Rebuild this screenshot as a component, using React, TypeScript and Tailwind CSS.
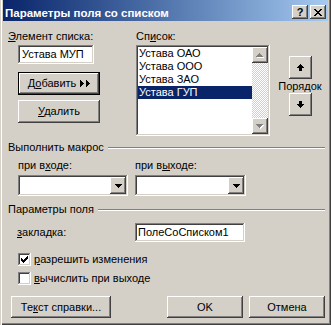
import React from "react";

const RAISED =
  "bg-[#d4d0c8] shadow-[inset_-1px_-1px_#404040,inset_1px_1px_#ffffff,inset_-2px_-2px_#808080,inset_2px_2px_#d4d0c8]";
const SUNKEN =
  "bg-white shadow-[inset_-1px_-1px_#ffffff,inset_1px_1px_#808080,inset_-2px_-2px_#d4d0c8,inset_2px_2px_#404040]";

function Pix({ rows, color, shadow }: { rows: string[]; color: string; shadow?: string }) {
  const w = rows[0].length;
  const h = rows.length;
  const ow = shadow ? w + 1 : w;
  const oh = shadow ? h + 1 : h;
  const pts: [number, number][] = [];
  rows.forEach((r, y) =>
    r.split("").forEach((c, x) => {
      if (c === "#") pts.push([x, y]);
    })
  );
  return (
    <svg width={ow} height={oh} viewBox={`0 0 ${ow} ${oh}`} shapeRendering="crispEdges" className="block">
      {shadow &&
        pts.map(([x, y]) => <rect key={`s${x}-${y}`} x={x + 1} y={y + 1} width={1} height={1} fill={shadow} />)}
      {pts.map(([x, y]) => (
        <rect key={`${x}-${y}`} x={x} y={y} width={1} height={1} fill={color} />
      ))}
    </svg>
  );
}

const CLOSE = ["##....##", ".##..##.", "..####..", "...##...", "..####..", ".##..##.", "##....##"];
const UP = ["...#...", "..###..", ".#####.", "#######", "..###..", "..###..", "..###.."];
const DOWN = [...UP].reverse();
const SMALL_DOWN = ["#######", ".#####.", "..###..", "...#..."];
const SMALL_UP = [...SMALL_DOWN].reverse();
const DBL = ["#.....#...", "##....##..", "###...###.", "####..####", "###...###.", "##....##..", "#.....#..."];
const CHECK = ["......#", ".....##", "#...###", "##.###.", "#####..", ".###...", "..#...."];

function Button({ w, h = 22, children, className = "" }: { w: number; h?: number; children: React.ReactNode; className?: string }) {
  return (
    <div className={`${RAISED} flex items-center justify-center ${className}`} style={{ width: w, height: h }}>
      {children}
    </div>
  );
}

function Combo({ w }: { w: number }) {
  return (
    <div className={`${SUNKEN} h-[21px] p-[2px] flex justify-end`} style={{ width: w }}>
      <div className={`${RAISED} w-[16px] h-[17px] flex items-center justify-center`}>
        <Pix rows={SMALL_DOWN} color="#000" />
      </div>
    </div>
  );
}

function Checkbox({ checked }: { checked: boolean }) {
  return (
    <div className={`${SUNKEN} w-[13px] h-[13px] pl-[3px] pt-[3px] shrink-0`}>
      {checked && <Pix rows={CHECK} color="#000" />}
    </div>
  );
}

function Separator({ label, mt }: { label: string; mt: string }) {
  return (
    <div className={`flex ml-[8px] mr-[6px] ${mt}`}>
      <span className="whitespace-nowrap">{label}</span>
      <div className="flex-1 ml-[4px] mt-[6px] h-[2px] border-t border-t-[#808080] border-b border-b-white" />
    </div>
  );
}

export default function App() {
  const items = ["Устава ОАО", "Устава ООО", "Устава ЗАО", "Устава ГУП"];
  return (
    <div className="font-['Liberation_Sans',Arial,sans-serif] w-[331px] h-[325px] bg-[#d4d0c8] text-[11px] leading-[13px] text-black overflow-hidden flex flex-col shadow-[inset_1px_0_#d4d0c8,inset_2px_0_#ffffff,inset_-1px_-1px_#404040,inset_-2px_-2px_#808080]">
      {/* Title bar */}
      <div className="mx-[3px] h-[21px] shrink-0 flex items-start pt-[5px] bg-linear-to-r from-[#0a246a] to-[#a6caf0]">
        <span className="ml-[2px] mt-[1px] text-[11.5px] leading-[14px] font-bold text-white whitespace-nowrap">
          Параметры поля со списком
        </span>
        <div className="ml-auto mr-[2px] flex gap-[2px]">
          <div className={`${RAISED} w-[16px] h-[14px] flex items-center justify-center text-[11px] leading-[11px] font-bold`}>
            ?
          </div>
          <div className={`${RAISED} w-[16px] h-[14px] flex items-center justify-center`}>
            <Pix rows={CLOSE} color="#000" />
          </div>
        </div>
      </div>

      {/* Section 1 */}
      <div className="flex mt-[9px]">
        <div className="ml-[8px] w-[128px] flex flex-col">
          <div>
            <u>Э</u>лемент списка:
          </div>
          <div className={`${SUNKEN} ml-[10px] mt-[2px] w-[76px] h-[19px] flex items-center pl-[4px]`}>Устава МУП</div>
          <div className="ml-[10px] mt-[8px] w-[82px] h-[23px] border border-black">
            <div className={`${RAISED} w-full h-full flex items-center justify-center gap-[4px]`}>
              <span>
                Д<u>о</u>бавить
              </span>
              <Pix rows={DBL} color="#000" />
            </div>
          </div>
          <Button w={82} h={23} className="ml-[10px] mt-[5px]">
            <span>
              <u>У</u>далить
            </span>
          </Button>
        </div>

        <div className="w-[134px] flex flex-col">
          <div>
            Сп<u>и</u>сок:
          </div>
          <div className={`${SUNKEN} mt-[2px] h-[91px] p-[2px] flex`}>
            <div className="flex-1 flex flex-col">
              {items.map((it, i) => (
                <div
                  key={it}
                  className={`h-[13px] pl-[1px] whitespace-nowrap ${i === 3 ? "bg-[#0a246a] text-white" : ""}`}
                >
                  {it}
                </div>
              ))}
            </div>
            <div className="w-[16px] flex flex-col">
              <div className={`${RAISED} h-[16px] flex items-center justify-center`}>
                <Pix rows={SMALL_UP} color="#808080" shadow="#ffffff" />
              </div>
              <div className="flex-1 bg-[conic-gradient(#ffffff_25%,#d4d0c8_0_50%,#ffffff_0_75%,#d4d0c8_0)] bg-[length:2px_2px]" />
              <div className={`${RAISED} h-[16px] flex items-center justify-center`}>
                <Pix rows={SMALL_DOWN} color="#808080" shadow="#ffffff" />
              </div>
            </div>
          </div>
        </div>

        <div className="ml-[8px] w-[44px] mt-[26px] flex flex-col items-center">
          <Button w={23} h={23}>
            <Pix rows={UP} color="#000" />
          </Button>
          <div className="mt-[1px]">Порядок</div>
          <Button w={23} h={23}>
            <Pix rows={DOWN} color="#000" />
          </Button>
        </div>
      </div>

      {/* Section 2 */}
      <Separator label="Выполнить макрос" mt="mt-[5px]" />
      <div className="flex mt-[5px] ml-[18px]">
        <div className="w-[117px]">
          при в<u>х</u>оде:
        </div>
        <div>
          при в<u>ы</u>ходе:
        </div>
      </div>
      <div className="flex mt-[3px] ml-[18px] gap-[7px]">
        <Combo w={110} />
        <Combo w={111} />
      </div>

      {/* Section 3 */}
      <Separator label="Параметры поля" mt="mt-[7px]" />
      <div className="flex items-center mt-[7px] ml-[17px]">
        <div className="w-[118px]">
          <u>з</u>акладка:
        </div>
        <div className={`${SUNKEN} w-[110px] h-[19px] flex items-center pl-[3px]`}>ПолеСоСписком1</div>
      </div>
      <div className="flex items-center mt-[11px] ml-[18px] h-[13px]">
        <Checkbox checked />
        <span className="ml-[3px]">
          <u>р</u>азрешить изменения
        </span>
      </div>
      <div className="flex items-center mt-[6px] ml-[18px] h-[13px]">
        <Checkbox checked={false} />
        <span className="ml-[3px]">
          <u>в</u>ычислить при выходе
        </span>
      </div>

      {/* Buttons */}
      <div className="flex mt-[11px] ml-[11px] mr-[6px]">
        <Button w={100}>
          <span>
            Те<u>к</u>ст справки...
          </span>
        </Button>
        <Button w={76} className="ml-auto">
          <span>OK</span>
        </Button>
        <Button w={76} className="ml-[6px]">
          <span>Отмена</span>
        </Button>
      </div>
    </div>
  );
}
